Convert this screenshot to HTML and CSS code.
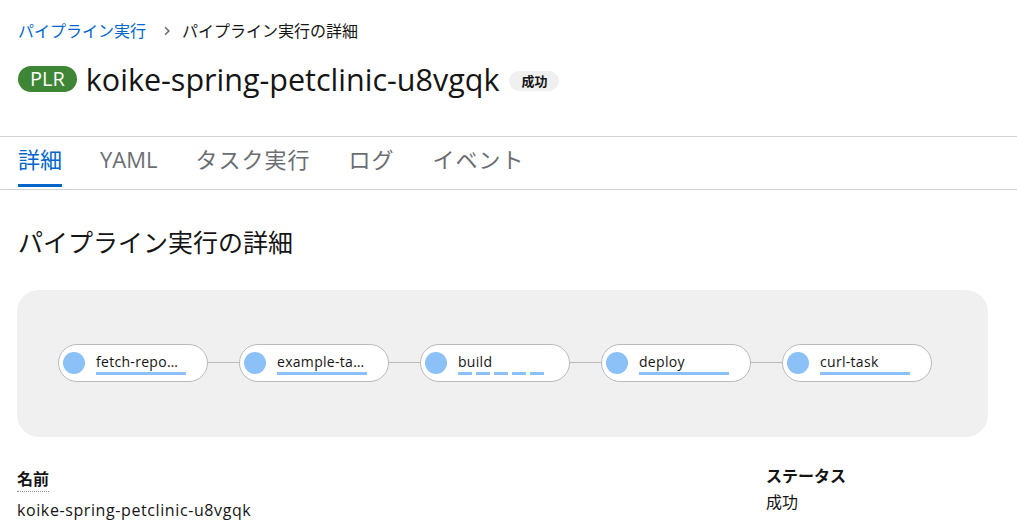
FILE: index.html
```html
<!DOCTYPE html>
<html lang="ja">
<head>
<meta charset="utf-8">
<link rel="stylesheet" href="styles.css">
</head>
<body>
<div class="page">
  <header class="head">
    <nav class="crumbs">
      <a class="crumb-link" href="#">パイプライン実行</a>
      <svg class="chev" viewBox="0 0 8 12" width="6" height="10"><path d="M1.5 1 L6.5 6 L1.5 11" fill="none" stroke="#6a6e73" stroke-width="2.2"/></svg>
      <span class="crumb-cur">パイプライン実行の詳細</span>
    </nav>
    <div class="title-row">
      <span class="plr">PLR</span>
      <h1 class="title">koike-spring-petclinic-u8vgqk</h1>
      <span class="status-badge">成功</span>
    </div>
  </header>
  <div class="tabs">
    <span class="tab active">詳細</span>
    <span class="tab">YAML</span>
    <span class="tab kana">タスク実行</span>
    <span class="tab kana">ログ</span>
    <span class="tab kana">イベント</span>
  </div>
  <section class="body">
    <h2 class="section-title">パイプライン実行の詳細</h2>
    <div class="graph">
      <div class="node" title="fetch-repository"><span class="dot"></span><span class="label"><span class="name">fetch-repo…</span></span></div>
      <span class="edge"></span>
      <div class="node" title="example-task"><span class="dot"></span><span class="label"><span class="name">example-ta…</span></span></div>
      <span class="edge"></span>
      <div class="node"><span class="dot"></span><span class="label dashed"><span class="name">build</span></span></div>
      <span class="edge"></span>
      <div class="node"><span class="dot"></span><span class="label"><span class="name">deploy</span></span></div>
      <span class="edge"></span>
      <div class="node"><span class="dot"></span><span class="label"><span class="name">curl-task</span></span></div>
    </div>
    <div class="details">
      <dl class="col">
        <dt class="term dotted">名前</dt>
        <dd class="val val-left">koike-spring-petclinic-u8vgqk</dd>
      </dl>
      <dl class="col col-right">
        <dt class="term">ステータス</dt>
        <dd class="val">成功</dd>
      </dl>
    </div>
  </section>
</div>
</body>
</html>
```
FILE: styles.css
```css
* { box-sizing: border-box; }
html, body { margin: 0; padding: 0; background: #fff; }
body {
  font-family: "Open Sans", "Noto Sans CJK JP", sans-serif;
  color: #151515;
  overflow: hidden;
}
.page { width: 1017px; height: 530px; }
.head { padding: 20px 18px 0 18px; height: 136px; }
.crumbs {
  display: flex; align-items: center;
  font-size: 16px; height: 22px; line-height: 22px;
}
.crumb-link { color: #0066cc; text-decoration: none; }
.chev { margin: 0 12px 0 18px; }
.crumb-cur { color: #151515; }
.title-row {
  display: flex; align-items: center; margin-top: 20px; height: 34px;
}
.plr {
  background: #3e8635; color: #fff; font-size: 20px; line-height: 26px;
  height: 26px; padding: 0 12px; border-radius: 13px; margin-right: 9px;
}
.title {
  margin: 0; font-weight: 400; font-size: 30.5px; line-height: 34px; color: #151515;
}
.status-badge {
  margin-left: 10px; background: #f0f0f0; border-radius: 10px;
  font-size: 13px; font-weight: 700; line-height: 20px; height: 20px;
  padding: 0 12px; margin-top: 4px;
}
.tabs {
  display: flex; gap: 38px; padding: 0 18px;
  border-top: 1px solid #d2d2d2; border-bottom: 1px solid #d2d2d2;
  height: 54px;
}
.tab {
  font-size: 22px; color: #6a6e73; line-height: 26px;
  padding-top: 9px; border-bottom: 3px solid transparent; height: 50px;
}
.tab.kana { letter-spacing: 1px; }
.tab.active { color: #0066cc; border-bottom-color: #0066cc; }
.body { padding: 0 29px 0 17px; }
.section-title {
  margin: 37px 0 0 1px; font-size: 25px; font-weight: 400; line-height: 30px;
}
.graph {
  margin-top: 33px; height: 147px; background: #f0f0f0; border-radius: 22px;
  display: flex; align-items: center; padding-left: 41px;
}
.node {
  width: 150px; height: 38px; border: 1px solid #b8bbbe; border-radius: 19px;
  background: #fff; display: flex; align-items: center; padding-left: 4px;
  margin-top: -2px;
}
.dot {
  width: 22px; height: 22px; border-radius: 50%; background: #8bc1f7; flex: none;
}
.label {
  margin-left: 11px; width: 90px; font-size: 14px; line-height: 18px;
  padding-bottom: 1px; border-bottom: 3px solid #8bc1f7; margin-top: 2px;
  letter-spacing: 0.3px;
}
.label.dashed {
  border-bottom: none; width: 86px;
  background-image: linear-gradient(to right, #8bc1f7 0 14px, transparent 14px 18px);
  background-size: 18px 3px; background-repeat: repeat-x; background-position: 0 100%;
  padding-bottom: 4px;
}
.name {
  display: block; overflow: hidden; white-space: nowrap;
}
.edge { width: 31px; height: 1px; background: #b8bbbe; margin-top: -2px; }
.details {
  display: grid; grid-template-columns: 749px 1fr; margin-top: 31px;
}
.col { margin: 0; }
.term {
  font-weight: 700; font-size: 16px; line-height: 22px; display: inline-block;
}
.dotted { border-bottom: 1px dotted #8a8d90; padding-bottom: 1px; }
.col-right { margin-top: -3px; }
.val { margin: 0; font-size: 16px; line-height: 24px; margin-top: 3px; }
.val-left { margin-top: 6px; letter-spacing: 0.6px; }
```
